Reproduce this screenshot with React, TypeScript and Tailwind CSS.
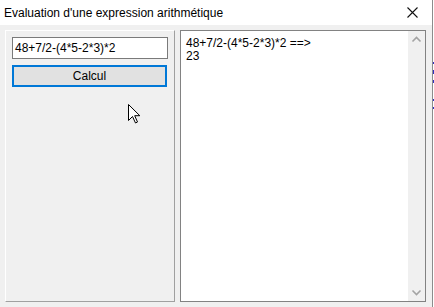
import React from 'react';

const font = { fontFamily: '"Liberation Sans", Arial, sans-serif' };

function Chevron({ up }: { up?: boolean }) {
  return (
    <svg width="17" height="17" viewBox="0 0 17 17">
      <path
        d={up ? 'M4.5 10.5 L8.5 6.5 L12.5 10.5' : 'M4.5 6.5 L8.5 10.5 L12.5 6.5'}
        fill="none"
        stroke="#a3a3a3"
        strokeWidth="1.6"
      />
    </svg>
  );
}

function Cursor() {
  return (
    <svg width="13" height="20" viewBox="0 0 13 20" className="absolute left-[128px] top-[104px]">
      <path
        d="M0.5 0.5 L0.5 16.5 L4.5 12.5 L7.5 19 L9.5 18 L6.7 11.7 L11.8 11.7 Z"
        fill="#fff"
        stroke="#000"
        strokeWidth="1"
        strokeLinejoin="miter"
      />
    </svg>
  );
}

export default function App() {
  const expression = '48+7/2-(4*5-2*3)*2';

  return (
    <div className="relative w-[434px] h-[307px] flex bg-[#f0f0f0] overflow-hidden text-[12px] text-black" style={font}>
      <div className="w-[432px] h-full flex flex-col">
        {/* title bar */}
        <div className="h-[25px] bg-white flex items-center justify-between pl-[4px] pr-[14px]">
          <span className="leading-none">Evaluation d'une expression arithmétique</span>
          <svg width="11" height="11" viewBox="0 0 11 11">
            <path d="M0.5 0.5 L10.5 10.5 M10.5 0.5 L0.5 10.5" stroke="#111" strokeWidth="1.1" />
          </svg>
        </div>

        <div className="flex-1 flex gap-[5px] pt-[5px] pl-[5px]">
          {/* left group */}
          <div className="w-[170px] h-[272px] border-t border-l border-white border-b border-r border-b-[#a0a0a0] border-r-[#a0a0a0] pt-[6px] pl-[6px]">
            <div className="w-[156px] h-[22px] bg-white border border-[#7a7a7a] flex items-center pl-[2px] leading-none">
              {expression}
            </div>
            <button className="mt-[6px] w-[155px] h-[22px] bg-[#e1e1e1] border-2 border-[#0078d7] flex items-center justify-center leading-none">
              Calcul
            </button>
          </div>

          {/* result area */}
          <div className="w-[246px] h-[272px] border border-[#828282] bg-white flex">
            <div className="flex-1 pl-[5px] pt-[6px] leading-[13px]">
              <div>{expression} ==&gt;</div>
              <div>23</div>
            </div>
            <div className="w-[17px] bg-[#f0f0f0] flex flex-col justify-between">
              <Chevron up />
              <Chevron />
            </div>
          </div>
        </div>
      </div>

      {/* edge of window behind */}
      <div className="w-[1px] h-full bg-[#8c8c8c]" />
      <div className="w-[1px] h-full bg-white flex flex-col gap-[6px] pt-[62px]">
        <div className="h-[2px] bg-[#3030c0]" />
        <div className="h-[4px] bg-[#3030c0]" />
        <div className="h-[3px] bg-[#3030c0]" />
        <div className="h-[2px] bg-[#3030c0] mt-[10px]" />
        <div className="h-[2px] bg-[#3030c0]" />
      </div>

      <Cursor />
    </div>
  );
}
